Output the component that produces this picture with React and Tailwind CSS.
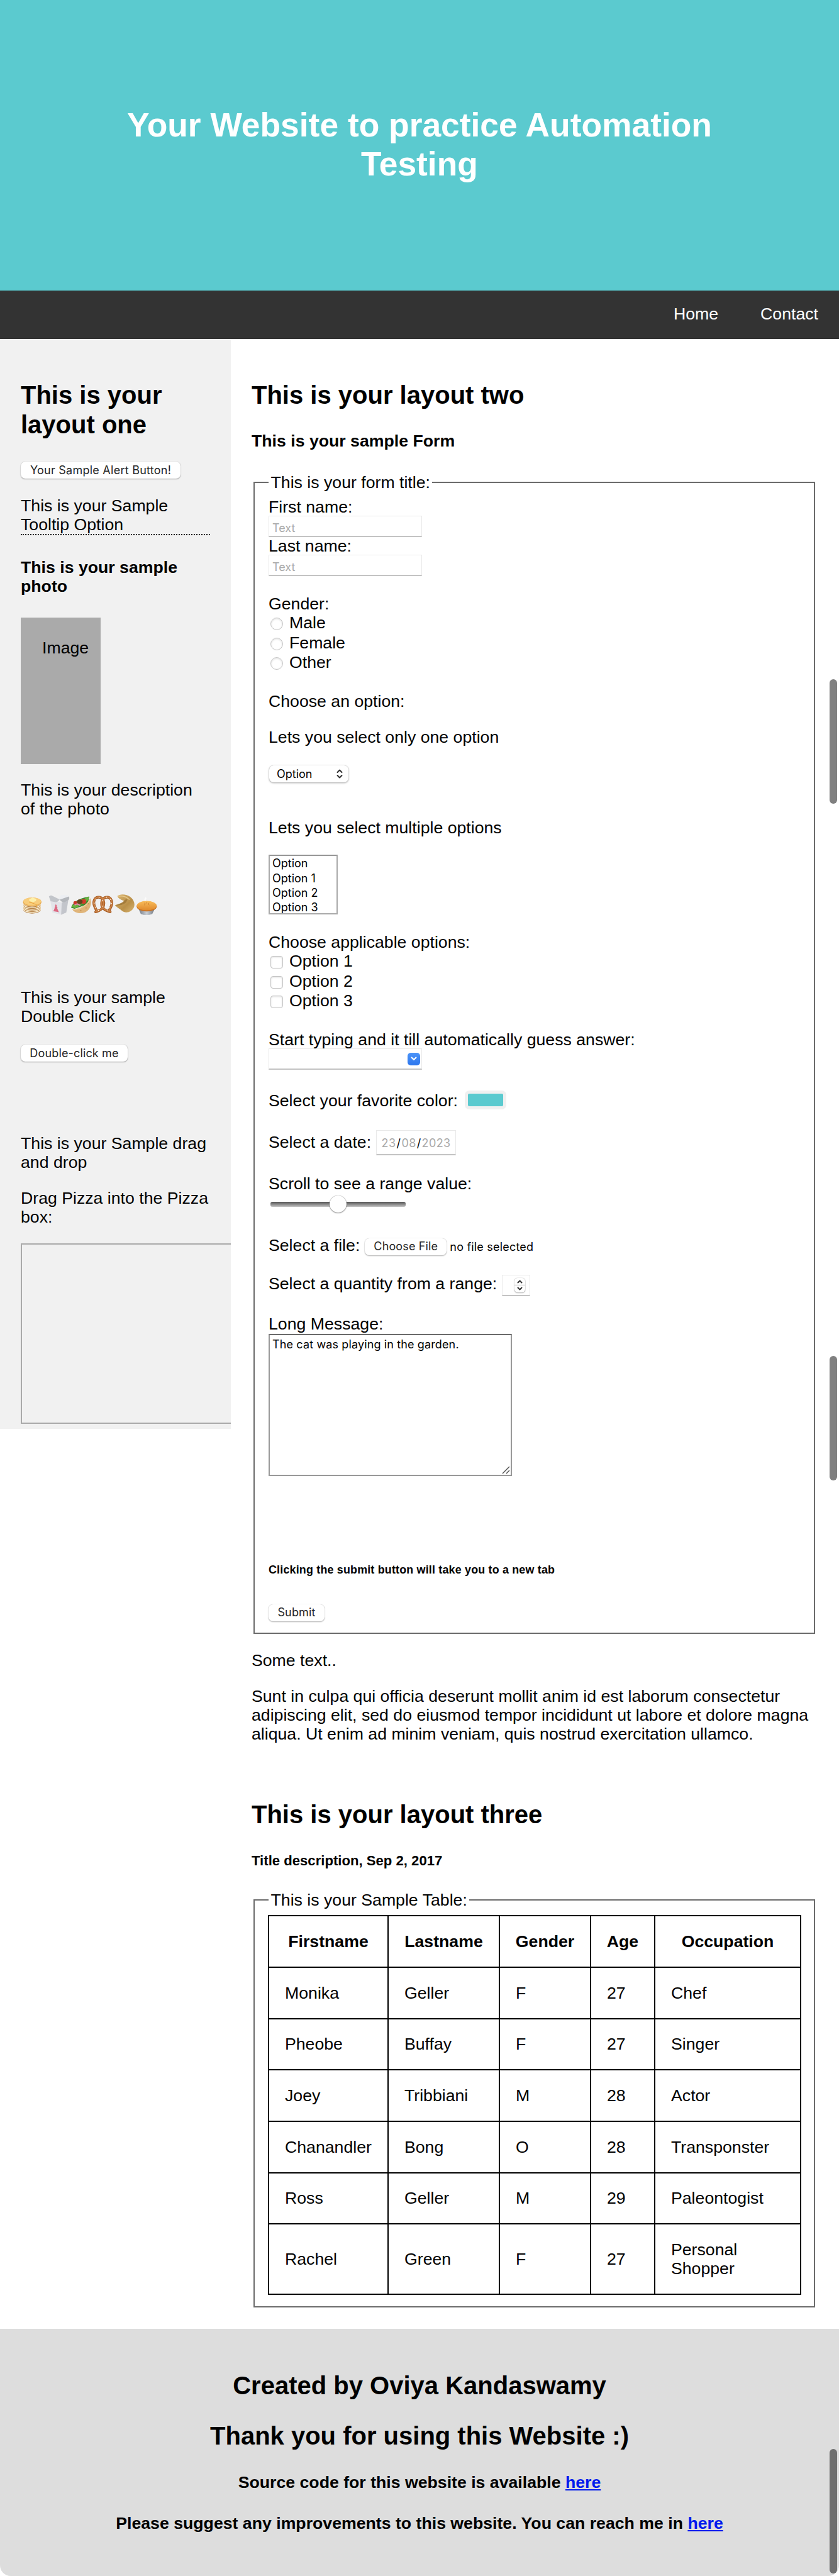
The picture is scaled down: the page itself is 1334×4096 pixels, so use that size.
import React from "react";

const people = [
  ["Monika", "Geller", "F", "27", "Chef"],
  ["Pheobe", "Buffay", "F", "27", "Singer"],
  ["Joey", "Tribbiani", "M", "28", "Actor"],
  ["Chanandler", "Bong", "O", "28", "Transponster"],
  ["Ross", "Geller", "M", "29", "Paleontogist"],
  ["Rachel", "Green", "F", "27", "Personal Shopper"],
];

const rowHeights = ["h-[82px]", "h-[81px]", "h-[82px]", "h-[82px]", "h-[81px]", "h-[112px]"];

function MacButton({ children, className = "" }) {
  return (
    <button
      className={
        "flex h-[27px] items-center justify-center rounded-[7px] bg-white font-['Inter',sans-serif] text-[18px] leading-none whitespace-nowrap text-[#262626] shadow-[0_0_1px_rgba(0,0,0,0.3),0_1px_2px_rgba(0,0,0,0.3)] " +
        className
      }
    >
      {children}
    </button>
  );
}

function Field({ className = "", children }) {
  return (
    <div
      className={
        "flex border border-[#e9e9e9] border-b-2 border-b-[#c3c3c3] bg-white font-['Inter',sans-serif] text-[18px] leading-none text-[#a9a9a9] " +
        className
      }
    >
      {children}
    </div>
  );
}

function Choice({ round, label }) {
  return (
    <label className="flex h-[31.6px] items-start">
      <span
        className={
          "mt-[7px] ml-[3px] h-5 w-5 border border-[#c4c4c4] bg-white shadow-[inset_0_1px_3px_rgba(0,0,0,0.14)] " +
          (round ? "rounded-full" : "rounded-[4px]")
        }
      />
      <span className="ml-[10px]">{label}</span>
    </label>
  );
}

function FoodRow() {
  return (
    <svg viewBox="0 0 870 210" className="mt-[108px] -ml-[8px] h-[58px] w-[242px]" aria-hidden="true">
      <defs>
        <linearGradient id="cookie" x1="0" y1="0" x2="1" y2="1">
          <stop offset="0" stopColor="#dcb873" />
          <stop offset=".6" stopColor="#b98f48" />
          <stop offset="1" stopColor="#d9b673" />
        </linearGradient>
        <linearGradient id="tin" x1="0" x2="1">
          <stop offset="0" stopColor="#707782" />
          <stop offset=".5" stopColor="#c9ced4" />
          <stop offset="1" stopColor="#6d747d" />
        </linearGradient>
        <linearGradient id="crust" x1="0" y1="0" x2="0" y2="1">
          <stop offset="0" stopColor="#f9bd5c" />
          <stop offset="1" stopColor="#e08a2c" />
        </linearGradient>
      </defs>
      {/* pancakes */}
      {[136, 127, 118, 109, 100].map((y) => (
        <g key={y}>
          <ellipse cx="91" cy={y} rx="50" ry="22" fill="#b5834a" />
          <ellipse cx="91" cy={y - 4} rx="51" ry="22" fill="#fdf0d2" />
        </g>
      ))}
      <ellipse cx="92" cy="91" rx="53" ry="25" fill="#e8ac52" />
      <ellipse cx="92" cy="88" rx="50" ry="23" fill="#f8cd7c" />
      <path d="M74 76l20-10 22 8-3 12-18 7-20-8z" fill="#fdf0ab" />
      <path d="M74 91l20 7 22 9v16" fill="none" stroke="#eaa53a" strokeWidth="4" />
      {/* takeout box */}
      <path d="M243 72l15-21 38 1 7 14-30 16z" fill="#eceef2" />
      <path d="M196 82l66 12-4 71-50-13z" fill="#e3e4e9" />
      <path d="M262 94l38-16-12 74-30 13z" fill="#c3c5cb" />
      <path d="M188 60q8-9 18-5l44 22q-10 16-24 15l-28-5z" fill="#c2c5ca" />
      <path d="M250 78l52-18q6 6 1 18l-24 14q-16 4-29-14z" fill="#b4b7bc" />
      <path d="M228 104l7 11-3 2 6 9-3 3 7 10-3 3 9 8-36-6 7-8-2-3 6-8-3-3 6-8-3-2z" fill="#dc6a82" />
      {/* stuffed flatbread */}
      <path d="M316 125c4-26 40-55 104-65l-8 44-76 26z" fill="#3f8a31" />
      <path d="M318 118l14-14 10-16 14 2 16-16 18 2 14-12 18-2-12 22-70 44z" fill="#69b13f" />
      <circle cx="340" cy="97" r="11" fill="#c93325" />
      <circle cx="388" cy="88" r="14" fill="#d23b2b" />
      <ellipse cx="366" cy="90" rx="16" ry="14" fill="#65431f" />
      <path d="M336 110q15-14 32 2" stroke="#e388b4" strokeWidth="7" fill="none" />
      <path d="M322 133c30 3 82-18 104-63 12 30 0 85-54 86-30 0-44-13-50-23z" fill="#e0b57a" />
      <path d="M328 134c32 1 76-18 96-54" fill="none" stroke="#efd0a0" strokeWidth="5" />
      <g fill="#b87f43">
        <circle cx="372" cy="141" r="3" />
        <circle cx="402" cy="126" r="3" />
        <circle cx="414" cy="102" r="3" />
      </g>
      {/* pretzel */}
      <g fill="none" strokeLinecap="round" strokeLinejoin="round">
        <path
          d="M503 112C508 88 498 64 474 64C448 64 442 92 449 112C454 128 462 134 462 144M492 112C488 88 498 64 523 64C548 64 554 92 548 112C543 128 535 134 535 144M503 112C498 130 480 142 457 148M492 112C497 130 516 142 541 148"
          stroke="#a4581f"
          strokeWidth="15"
        />
        <path
          d="M503 111C508 88 498 63 474 63C448 63 442 92 449 111C454 127 462 133 462 143M492 111C488 88 498 63 523 63C548 63 554 92 548 111C543 127 535 133 535 143M503 111C498 129 480 141 457 147M492 111C497 129 516 141 541 147"
          stroke="#c98046"
          strokeWidth="8"
        />
      </g>
      <g fill="#fff3df">
        <circle cx="457" cy="75" r="3" />
        <circle cx="477" cy="65" r="3" />
        <circle cx="449" cy="98" r="3" />
        <circle cx="456" cy="122" r="3" />
        <circle cx="497" cy="82" r="3" />
        <circle cx="520" cy="64" r="3" />
        <circle cx="543" cy="78" r="3" />
        <circle cx="548" cy="100" r="3" />
        <circle cx="538" cy="125" r="3" />
        <circle cx="497" cy="116" r="3" />
        <circle cx="473" cy="141" r="3" />
        <circle cx="524" cy="142" r="3" />
      </g>
      {/* fortune cookie */}
      <path d="M582 57c14-14 54-12 74 5 32 26 32 63 4 81-20 13-41 8-51-1-12-12-31-20-41-32 12-5 38-10 53-24-12-6-34-13-39-29z" fill="url(#cookie)" />
      <path d="M621 86c2-8 12-12 19-9-2 8-6 13-10 18-20 16-42 17-60 16 18-5 36-12 51-25z" fill="#a47c3c" />
      <path d="M588 58c24-4 48 4 64 20" fill="none" stroke="#e8ca8d" strokeWidth="5" />
      {/* pie */}
      <path d="M703 128h96l-16 32q-34 14-66 0z" fill="url(#tin)" />
      <ellipse cx="751" cy="117" rx="58" ry="29" fill="#c97325" />
      <ellipse cx="751" cy="112" rx="57" ry="27" fill="url(#crust)" />
      <path d="M737 97l7 5M765 97l-7 5M751 92v8M736 109l6-3M766 109l-6-3" stroke="#c47527" strokeWidth="3" />
      <path d="M745 84c-12-9 8-10-3-17" fill="none" stroke="#fff" strokeWidth="8" opacity=".7" />
    </svg>
  );
}

function Sidebar() {
  return (
    <aside className="flex h-[1733px] w-[367px] shrink-0 flex-col items-start overflow-hidden bg-[#f1f1f1] pl-[33px]">
      <h2 className="mt-[66px] w-[300px] text-[40px] leading-[47px] font-bold">This is your layout one</h2>
      <MacButton className="mt-[35px] w-[254px] tracking-[0.25px]">Your Sample Alert Button!</MacButton>
      <div className="mt-[28px] w-[301px] border-b-2 border-dotted border-black">This is your Sample Tooltip Option</div>
      <h4 className="mt-[36px] w-[301px] font-bold">This is your sample photo</h4>
      <div className="mt-[35px] h-[233px] w-[127px] bg-[#aaaaaa] pt-[33px] pl-[34px]">Image</div>
      <p className="mt-[26px] w-[301px]">This is your description of the photo</p>
      <FoodRow />
      <p className="mt-[104px] w-[301px]">This is your sample Double Click</p>
      <MacButton className="mt-[30px] w-[170px] tracking-[0.15px]">Double-click me</MacButton>
      <p className="mt-[115px] w-[301px]">This is your Sample drag and drop</p>
      <p className="mt-[27px] w-[301px]">Drag Pizza into the Pizza box:</p>
      <div className="mt-[27px] h-[287px] w-[584px] shrink-0 border-2 border-[#aaaaaa]" />
    </aside>
  );
}

function SampleForm() {
  return (
    <fieldset className="mt-[36px] ml-[3px] w-[893px] border-2 border-[#6b6b6b] px-[22px] pt-[9px] pb-[18px]">
      <legend className="px-[3.5px]">This is your form title:</legend>
      <div>First name:</div>
      <Field className="-mt-px h-[34px] w-[244px] items-center pt-[6px] pl-[5px]">Text</Field>
      <div className="-mt-px">Last name:</div>
      <Field className="-mt-px h-[34px] w-[244px] items-center pt-[6px] pl-[5px]">Text</Field>

      <div className="mt-[29px]">Gender:</div>
      <Choice round label="Male" />
      <Choice round label="Female" />
      <Choice round label="Other" />

      <p className="mt-[30px]">Choose an option:</p>
      <p className="mt-[27.5px]">Lets you select only one option</p>
      <div className="mt-[29.5px] ml-px flex h-[27.5px] w-[126px] items-center justify-between rounded-[7px] bg-white pr-[9px] pl-[12px] font-['Inter',sans-serif] text-[18px] leading-none shadow-[0_0_1px_rgba(0,0,0,0.3),0_1px_3px_rgba(0,0,0,0.35)]">
        Option
        <svg viewBox="0 0 10 15" className="h-[15px] w-[10px]" fill="none" stroke="#333" strokeWidth="2" strokeLinecap="round" strokeLinejoin="round">
          <path d="M1.5 5L5 1.5 8.5 5M1.5 10L5 13.5 8.5 10" />
        </svg>
      </div>
      <p className="mt-[57px]">Lets you select multiple options</p>
      <ul className="mt-[28px] h-[94.5px] w-[110px] overflow-hidden border-2 border-[#aaaaaa] border-t-[#969696] pl-[4px] font-['Inter',sans-serif] text-[18px] leading-[23.3px]">
        <li>Option</li>
        <li>Option 1</li>
        <li>Option 2</li>
        <li>Option 3</li>
      </ul>

      <div className="mt-[29.5px]">Choose applicable options:</div>
      <Choice label="Option 1" />
      <Choice label="Option 2" />
      <Choice label="Option 3" />

      <div className="mt-[30px]">Start typing and it till automatically guess answer:</div>
      <Field className="-mt-px h-[34px] w-[244px] items-center justify-end pr-[2px]">
        <span className="flex h-5 w-5 items-center justify-center rounded-[5px] bg-linear-to-b from-[#4b93f8] to-[#2e77ee]">
          <svg viewBox="0 0 10 7" className="h-[7px] w-[10px]" fill="none" stroke="#fff" strokeWidth="2" strokeLinecap="round" strokeLinejoin="round">
            <path d="M1.5 1.5L5 5l3.5-3.5" />
          </svg>
        </span>
      </Field>

      <div className="mt-[34px] flex h-[30px] items-start">
        Select your favorite color:
        <span className="-mt-px ml-[11px] h-[30px] w-[66px] rounded-[7px] bg-[#f0f0f0] p-[5px]">
          <span className="block h-full rounded-[2px] bg-[#5bcacf]" />
        </span>
      </div>

      <div className="mt-[36px] flex h-[30px] items-start">
        Select a date:
        <Field className="-mt-[4px] ml-[8px] h-[40px] w-[127px] items-center justify-center pt-[3px] tracking-[0.4px] whitespace-nowrap">
          <span>23</span>
          <span className="px-[1px] text-black">/</span>
          <span>08</span>
          <span className="px-[1px] text-black">/</span>
          <span>2023</span>
        </Field>
      </div>

      <div className="mt-[35.5px]">Scroll to see a range value:</div>
      <div className="mt-[4.5px] ml-[3px] flex h-[27px] w-[215px] items-center">
        <div className="flex h-[8px] w-full items-center rounded-[3px] bg-linear-to-b from-[#555555] to-[#c4c4c4]">
          <span className="ml-[94px] h-[27px] w-[27px] shrink-0 rounded-full bg-white shadow-[0_0_1px_rgba(0,0,0,0.6),0_1px_2px_rgba(0,0,0,0.4)]" />
        </div>
      </div>

      <div className="mt-[36.6px] flex h-[30px] items-start">
        Select a file:
        <MacButton className="mt-[4px] ml-[8px] w-[130px] tracking-[0.15px]">Choose File</MacButton>
        <span className="mt-[4px] ml-[5px] font-['Inter',sans-serif] text-[18px] leading-[27px] tracking-[0.2px]">no file selected</span>
      </div>

      <div className="mt-[31.7px] flex h-[30px] items-start">
        Select a quantity from a range:
        <Field className="mt-px ml-[8px] h-[34px] w-[45px] items-center justify-end pr-[7px]">
          <span className="flex h-[23px] w-[17px] flex-col rounded-[5px] shadow-[0_0_1px_rgba(0,0,0,0.4),0_1px_2px_rgba(0,0,0,0.3)]">
            <svg viewBox="0 0 17 23" className="h-[23px] w-[17px]" fill="none" stroke="#333" strokeWidth="2" strokeLinecap="round" strokeLinejoin="round">
              <path d="M5.5 7.500l3-3 3 3M5.5 15.500l3 3 3-3" />
              <path d="M0 11.5h17" stroke="#dcdcdc" strokeWidth="1.5" />
            </svg>
          </span>
        </Field>
      </div>

      <div className="mt-[33.7px]">Long Message:</div>
      <div className="mt-[0.5px] flex h-[226px] w-[387px] flex-col justify-between border-2 border-[#999999] border-t-[#6b6b6b] pt-px pl-[4px] font-['Inter',sans-serif] text-[18px] leading-[27px]">
        <span className="tracking-[0.13px]">The cat was playing in the garden.</span>
        <svg viewBox="0 0 13 13" className="mr-px mb-px h-[13px] w-[13px] self-end" stroke="#555" strokeWidth="1.5">
          <path d="M1 12L12 1M7 12l5-5" />
        </svg>
      </div>

      <h6 className="mt-[139.5px] text-[17.87px] leading-[20px] font-bold tracking-[0.2px]">
        Clicking the submit button will take you to a new tab
      </h6>
      <MacButton className="mt-[44.6px] w-[89px] tracking-[0.15px]">Submit</MacButton>
    </fieldset>
  );
}

function SampleTable() {
  return (
    <fieldset className="mt-[35px] ml-[3px] w-[893px] border-2 border-[#6b6b6b] pt-[9px] pr-[20px] pb-[18px] pl-[21px]">
      <legend className="ml-px px-[3.5px]">This is your Sample Table:</legend>
      <table className="w-[847px] table-fixed border-collapse border-2 border-black text-left">
        <colgroup>
          <col className="w-[190px]" />
          <col className="w-[177px]" />
          <col className="w-[145px]" />
          <col className="w-[102px]" />
          <col className="w-[232px]" />
        </colgroup>
        <thead>
          <tr className="h-[82px]">
            {["Firstname", "Lastname", "Gender", "Age", "Occupation"].map((h) => (
              <th key={h} className="border-2 border-black text-center font-bold">{h}</th>
            ))}
          </tr>
        </thead>
        <tbody>
          {people.map((p, i) => (
            <tr key={p[0]} className={rowHeights[i]}>
              {p.map((c, j) => (
                <td key={j} className={"border-2 border-black pl-[25px] " + (j === 4 ? "pr-[80px]" : "")}>{c}</td>
              ))}
            </tr>
          ))}
        </tbody>
      </table>
    </fieldset>
  );
}

export default function App() {
  return (
    <div className="relative flex h-[4096px] w-[1334px] flex-col overflow-hidden bg-white font-['Liberation_Sans',Arial,sans-serif] text-[26.68px] leading-[30px] text-black">
      <header className="h-[462px] shrink-0 bg-[#5bcacf] pt-[168px] text-center text-white">
        <h1 className="text-[53.36px] leading-[62px] font-bold">
          Your Website to practice Automation
          <br />
          Testing
        </h1>
      </header>
      <nav className="flex h-[77px] shrink-0 justify-end gap-[67px] bg-[#333333] pt-[22px] pr-[33px] text-white">
        <a href="#home">Home</a>
        <a href="#contact">Contact</a>
      </nav>

      <div className="flex h-[3164px] shrink-0 items-start">
        <Sidebar />
        <main className="w-[967px] pl-[33px]">
          <h2 className="mt-[66px] text-[40px] leading-[47px] font-bold">This is your layout two</h2>
          <h4 className="mt-[34px] font-bold">This is your sample Form</h4>
          <SampleForm />
          <p className="mt-[27.4px]">Some text..</p>
          <p className="mt-[26.7px] w-[901px]">
            Sunt in culpa qui officia deserunt mollit anim id est laborum consectetur adipiscing elit, sed do eiusmod
            tempor incididunt ut labore et dolore magna aliqua. Ut enim ad minim veniam, quis nostrud exercitation
            ullamco.
          </p>
          <h2 className="mt-[90.3px] text-[40px] leading-[47px] font-bold">This is your layout three</h2>
          <h5 className="mt-[36.6px] text-[22.14px] leading-[25px] font-bold">Title description, Sep 2, 2017</h5>
          <SampleTable />
        </main>
      </div>

      <footer className="grow rounded-b-[17px] bg-[#dddddd] pt-[67px] text-center font-bold">
        <h2 className="text-[40px] leading-[47px]">Created by Oviya Kandaswamy</h2>
        <h2 className="mt-[33px] text-[40px] leading-[47px]">Thank you for using this Website :)</h2>
        <h4 className="mt-[35px]">
          Source code for this website is available <a href="#source" className="text-[#0019ee] underline">here</a>
        </h4>
        <h4 className="mt-[35px]">
          Please suggest any improvements to this website. You can reach me in{" "}
          <a href="#contact" className="text-[#0019ee] underline">here</a>
        </h4>
      </footer>

      {/* overlay scrollbar thumbs */}
      <span className="absolute top-[1080px] right-[3px] h-[198px] w-[12px] rounded-full bg-[#808080]" />
      <span className="absolute top-[2156px] right-[3px] h-[198px] w-[12px] rounded-full bg-[#808080]" />
      <span className="absolute top-[3894px] right-[3px] h-[198px] w-[12px] rounded-full bg-[#6f6f6f]" />
    </div>
  );
}
